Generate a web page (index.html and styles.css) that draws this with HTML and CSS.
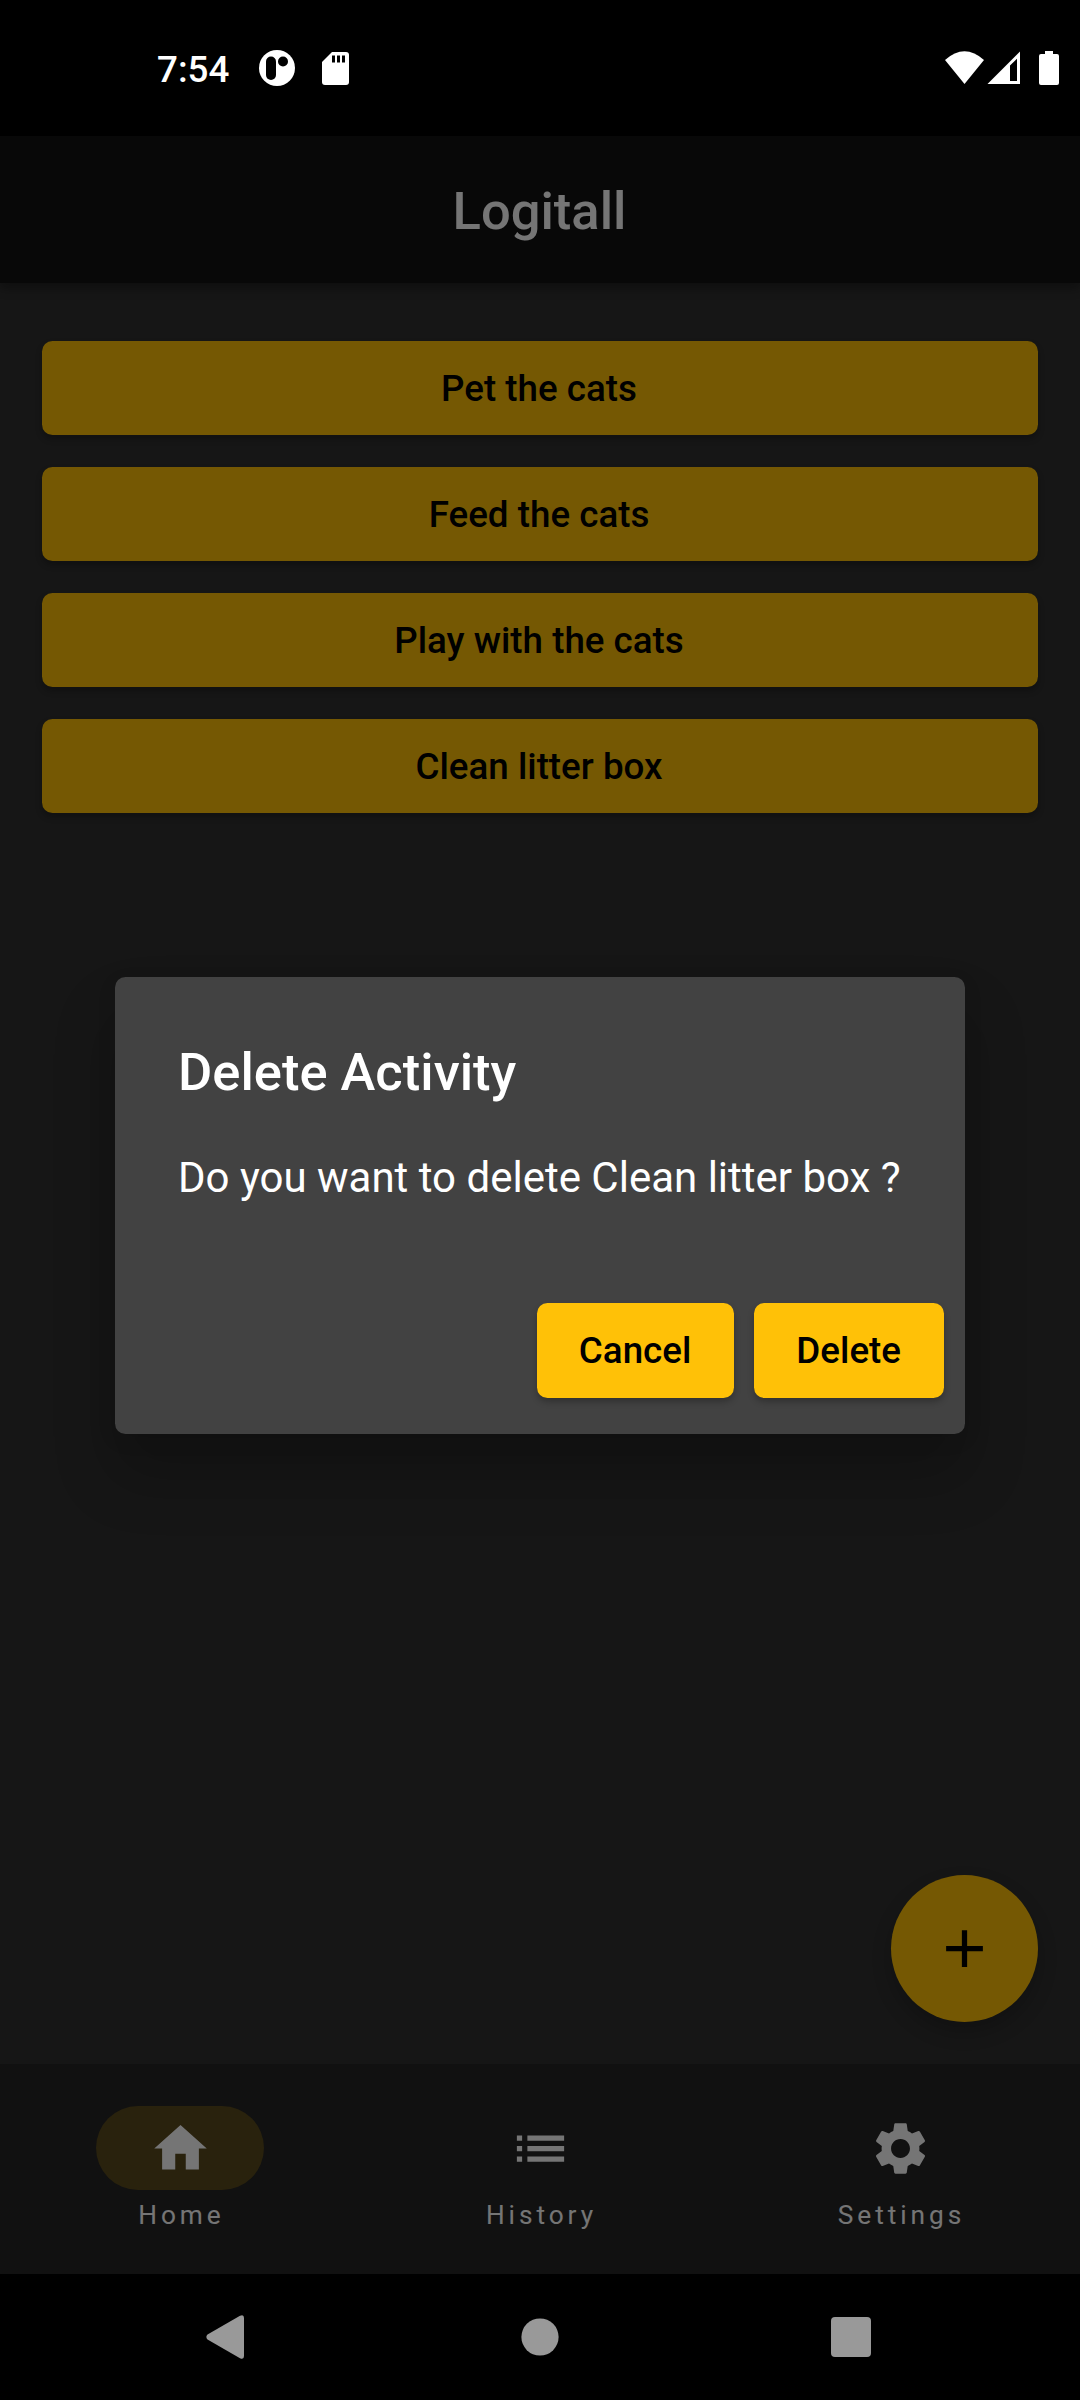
FILE: index.html
```html
<!DOCTYPE html>
<html lang="en">
<head>
<meta charset="utf-8">
<title>Logitall</title>
<link rel="stylesheet" href="styles.css">
</head>
<body>
<div class="phone">
  <header class="status">
    <span class="clock">7:54</span>
    <svg class="notice" width="36" height="36" viewBox="0 0 36 36"><circle cx="18" cy="18" r="18" fill="#fff"/><rect x="7" y="6.500" width="10" height="23.500" rx="5"/><circle cx="24" cy="11.500" r="5"/></svg>
    <svg class="sdcard" width="27" height="33" viewBox="0 0 27 33"><path fill="#fff" d="M10 0h14q3 0 3 3v27q0 3-3 3H3q-3 0-3-3V10z"/><path d="M10 3.500h3v7h-3zM15 3.500h3v7h-3zM20 3.500h3v7h-3z"/></svg>
    <svg class="signals" width="116" height="34" viewBox="0 0 116 34"><g fill="#fff"><path d="M0 9Q19.500-8.500 39 9L19.500 33z"/><path fill-rule="evenodd" d="M42.500 33L75 .5V33zM65 14.500V30h7V7.800z"/><path d="M100 0h8v3h4q2 0 2 2v27q0 2-2 2H96q-2 0-2-2V5q0-2 2-2h4z"/></g></svg>
  </header>
  <div class="app">
    <h1 class="appbar">Logitall</h1>
    <main class="list">
      <button class="btn">Pet the cats</button>
      <button class="btn">Feed the cats</button>
      <button class="btn">Play with the cats</button>
      <button class="btn">Clean litter box</button>
    </main>
    <button class="fab" aria-label="Add"><svg class="icon" viewBox="0 0 24 24"><path d="M19 13h-6v6h-2v-6H5v-2h6V5h2v6h6z"/></svg></button>
    <nav class="tabs">
      <div class="tab active"><span class="pill"><svg class="icon" viewBox="0 0 24 24"><path d="M10 20v-6h4v6h5v-8h3L12 3 2 12h3v8z"/></svg></span><span class="label">Home</span></div>
      <div class="tab"><span class="pill"><svg class="icon" viewBox="0 0 24 24"><path d="M3 13h2v-2H3v2zm0 4h2v-2H3v2zm0-8h2V7H3v2zm4 4h14v-2H7v2zm0 4h14v-2H7v2zM7 7v2h14V7H7z"/></svg></span><span class="label">History</span></div>
      <div class="tab"><span class="pill"><svg class="icon" viewBox="0 0 24 24"><path d="M19.140 12.940c.04-.3.06-.61.06-.94 0-.32-.02-.64-.07-.94l2.030-1.580c.18-.14.23-.41.12-.61l-1.920-3.320c-.12-.22-.37-.29-.59-.22l-2.390.96c-.5-.38-1.030-.7-1.620-.94l-.36-2.540c-.04-.24-.24-.41-.48-.41h-3.840c-.24 0-.43.17-.47.41l-.36 2.540c-.59.24-1.130.57-1.620.94l-2.390-.96c-.22-.08-.47 0-.59.22L2.740 8.870c-.12.21-.08.47.12.61l2.030 1.580c-.05.3-.09.63-.09.94s.02.64.07.94l-2.030 1.580c-.18.14-.23.41-.12.61l1.920 3.320c.12.22.37.29.59.22l2.390-.96c.5.38 1.030.7 1.620.94l.36 2.540c.05.24.24.41.48.41h3.840c.24 0 .44-.17.47-.41l.36-2.540c.59-.24 1.130-.56 1.620-.94l2.390.96c.22.08.47 0 .59-.22l1.920-3.320c.12-.22.07-.47-.12-.61l-2.010-1.580zM12 15.600c-1.980 0-3.600-1.620-3.600-3.600s1.620-3.600 3.600-3.600 3.600 1.620 3.600 3.600-1.620 3.600-3.600 3.600z"/></svg></span><span class="label">Settings</span></div>
    </nav>
    <div class="scrim">
      <section class="dialog">
        <h2 class="dialog-title">Delete Activity</h2>
        <p class="dialog-text">Do you want to delete Clean litter box ?</p>
        <div class="actions"><button class="btn">Cancel</button><button class="btn">Delete</button></div>
      </section>
    </div>
  </div>
  <footer class="system">
    <svg width="38" height="44" viewBox="0 0 38 44"><path d="M34 .8Q38-1 38 3V41q0 4-4 2.200L1.500 24.500Q-.8 22 1.500 19.500z"/></svg>
    <svg width="38" height="38" viewBox="0 0 38 38"><circle cx="19" cy="19" r="18.600"/></svg>
    <svg width="40" height="40" viewBox="0 0 40 40"><rect width="40" height="40" rx="4"/></svg>
  </footer>
</div>
</body>
</html>
```
FILE: styles.css
```css
* { box-sizing: border-box; }
body { margin: 0; background: #000; font-family: Roboto, sans-serif; color: #fff; }
h1, h2, p { margin: 0; }
svg { display: block; }
button { border: 0; font-family: inherit; }

.phone { width: 1080px; height: 2400px; display: flex; flex-direction: column; }

.status { height: 136px; padding: 0 19px 0 157px; display: flex; align-items: center; }
.clock { font-size: 36.75px; font-weight: 500; width: 102px; margin-top: 2px; }
.sdcard { margin-left: 27px; }
.signals { margin-left: auto; }

.app { position: relative; height: 2138px; background: #303030; display: flex; flex-direction: column; }
.appbar { height: 147px; padding-right: 1px; background: #121212; font-size: 52.5px; font-weight: 500; line-height: 151px; text-align: center; box-shadow: 0 5px 10px rgba(0,0,0,.35); }
.list { flex: 1; padding: 58px 42px 0; display: flex; flex-direction: column; gap: 32px; }
.btn { height: 94px; padding: 0 43px 0 42px; border-radius: 10.5px; background: #ffc107; color: #000; font-size: 36.75px; font-weight: 500; box-shadow: 0 4px 6px rgba(0,0,0,.25); }
.list .btn { padding-right: 44px; }

.fab { align-self: flex-end; width: 147px; height: 147px; margin: 0 42px 42px 0; padding: 42px; border-radius: 50%; background: #ffc107; box-shadow: 0 10px 20px rgba(0,0,0,.2); }
.icon { width: 63px; height: 63px; }

.tabs { height: 210px; background: #252525; display: flex; }
.tab { flex: 1; padding-top: 42px; display: flex; flex-direction: column; align-items: center; gap: 10px; }
.pill { width: 168px; height: 84px; border-radius: 42px; display: flex; align-items: center; justify-content: center; fill: #fff; }
.active .pill { background: rgba(255,193,7,.24); }
.label { padding-left: 3px; font-size: 26.25px; line-height: 31px; letter-spacing: 3.94px; }

.scrim { position: absolute; inset: 0; background: rgba(0,0,0,.54); display: flex; align-items: center; justify-content: center; }
.dialog { width: 850px; height: 457px; padding: 63px 21px 36px 63px; border-radius: 10.5px; background: #424242; box-shadow: 0 40px 60px 4px rgba(0,0,0,.2), 0 6px 20px rgba(0,0,0,.08); display: flex; flex-direction: column; }
.dialog-title { font-size: 52.5px; font-weight: 500; line-height: 65px; }
.dialog-text { margin-top: 48px; font-size: 42px; line-height: 50px; white-space: nowrap; }
.actions { margin-top: auto; display: flex; justify-content: flex-end; gap: 20px; }
.actions .btn { height: 95px; padding-top: 1px; }

.system { height: 126px; padding: 0 209px 0 206px; display: grid; grid-template-columns: 38px 1fr 40px; align-items: center; fill: #999; }
.system svg:nth-child(2) { justify-self: center; margin-left: 5px; }
```
